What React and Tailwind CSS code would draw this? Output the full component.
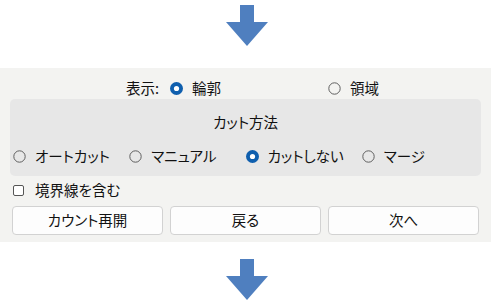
import React from 'react';

const font = { fontFamily: '"Noto Sans CJK JP", "Noto Sans", sans-serif' };

const DownArrow = () => (
    <svg width="44" height="42" viewBox="0 0 44 42" className="block">
        <polygon points="15,0 29,0 29,17 43,17 22,41 1,17 15,17" fill="#4f7fbf" />
    </svg>
);

const Radio = ({ checked }) => (
    <svg width="13" height="13" viewBox="0 0 13 13" className="shrink-0">
        {checked ? (
            <>
                <circle cx="6.5" cy="6.5" r="6.5" fill="#0f5fae" />
                <circle cx="6.5" cy="6.5" r="2.6" fill="#ffffff" />
            </>
        ) : (
            <circle cx="6.5" cy="6.5" r="5.7" fill="none" stroke="#5f5f5f" strokeWidth="1" />
        )}
    </svg>
);

const Option = ({ checked, label, className = '' }) => (
    <div className={`flex items-center gap-[9px] ${className}`}>
        <Radio checked={checked} />
        <span>{label}</span>
    </div>
);

const cutOptions = [
    { label: 'オートカット', checked: false },
    { label: 'マニュアル', checked: false },
    { label: 'カットしない', checked: true },
    { label: 'マージ', checked: false },
];

export default function App() {
    return (
        <div
            className="w-[491px] h-[304px] bg-white text-[#111] text-[14.5px] leading-none [font-feature-settings:'palt']"
            style={font}
        >
            {/* top arrow */}
            <div className="h-[68px] flex justify-center pt-[5px] pl-[2px]">
                <DownArrow />
            </div>

            {/* panel */}
            <div className="h-[174px] bg-[#f3f3f1] flex flex-col">
                <div className="h-[31px] flex items-center pl-[126px] pt-[9px]">
                    <span className="w-[44px]">表示:</span>
                    <Option checked label="輪郭" className="w-[158px]" />
                    <Option checked={false} label="領域" />
                </div>

                <div className="mx-[10px] h-[77px] bg-[#e7e7e7] rounded-[5px] flex flex-col">
                    <div className="h-[45px] flex items-center justify-center pt-[2px]">カット方法</div>
                    <div className="grid grid-cols-4 pl-[3px] pr-[3px] h-[24px] items-center">
                        {cutOptions.map((o, i) => (
                            <Option key={i} checked={o.checked} label={o.label} />
                        ))}
                    </div>
                </div>

                <div className="h-[27px] flex items-center pl-[13px] gap-[11px] pt-[2px]">
                    <span className="w-[11px] h-[11px] border border-[#555] rounded-[2px] bg-white shrink-0" />
                    <span>境界線を含む</span>
                </div>

                <div className="flex gap-[7px] pl-[12px] pt-[3px]">
                    {['カウント再開', '戻る', '次へ'].map((t, i) => (
                        <div
                            key={i}
                            className="w-[151px] h-[29px] bg-[#fdfdfd] border border-[#d2d2d2] rounded-[4px] flex items-center justify-center"
                        >
                            {t}
                        </div>
                    ))}
                </div>
            </div>

            {/* bottom arrow */}
            <div className="flex justify-center pt-[17px] pl-[2px]">
                <DownArrow />
            </div>
        </div>
    );
}
